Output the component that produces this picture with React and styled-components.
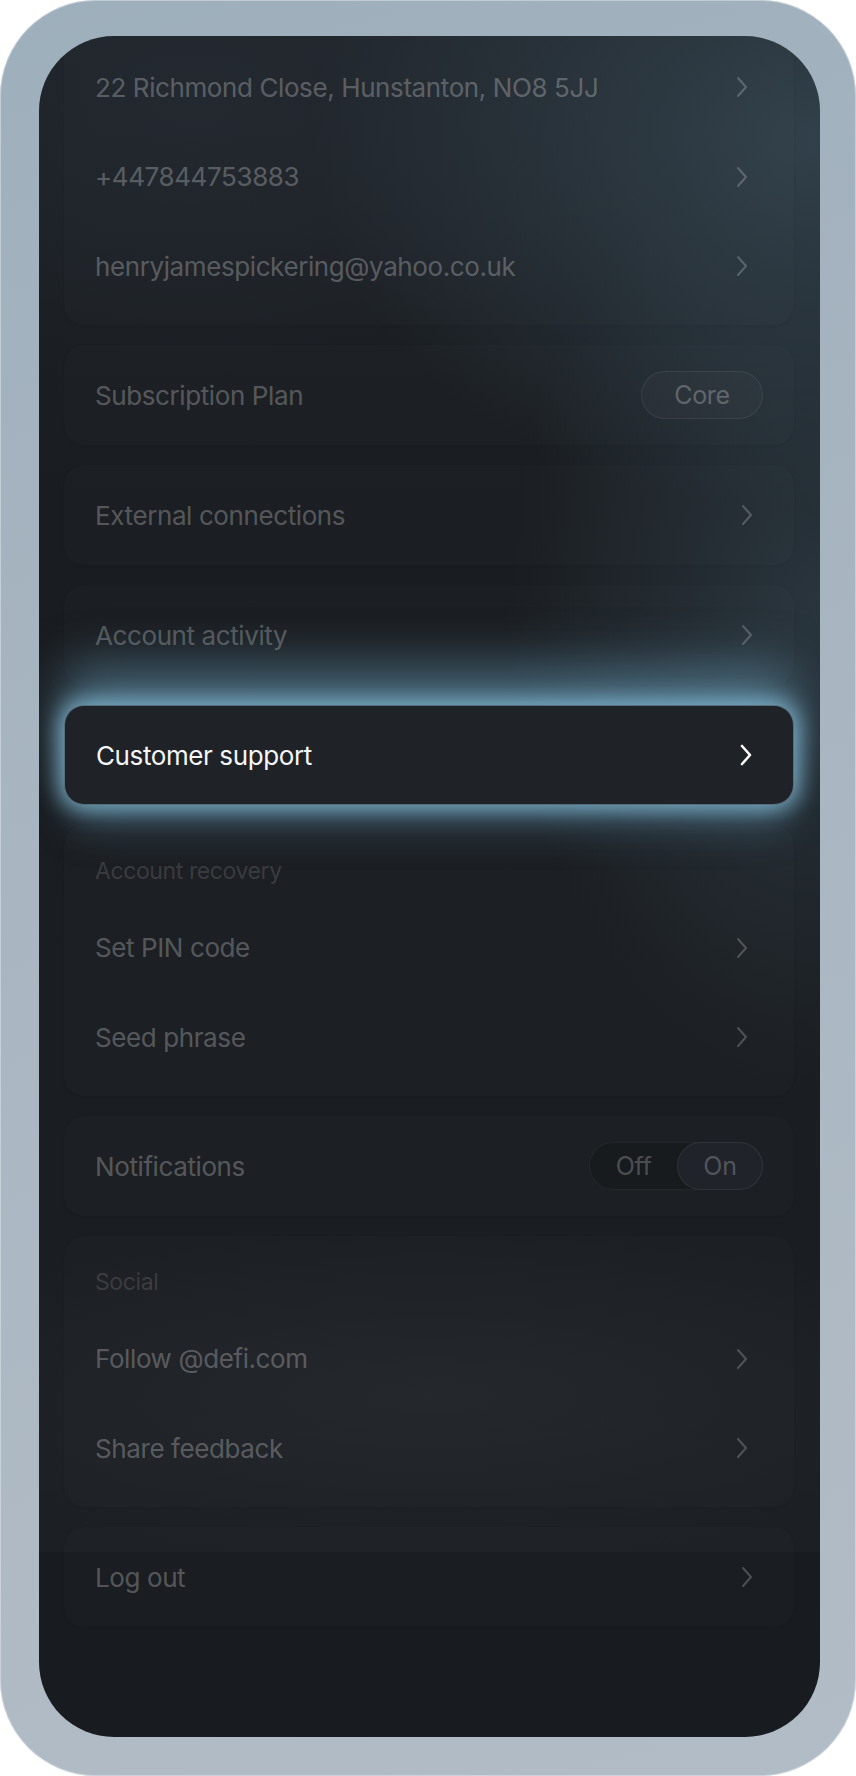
import React from "react";
import styled, { createGlobalStyle, css } from "styled-components";

const GlobalStyle = createGlobalStyle`
    html, body {
        margin: 0;
        padding: 0;
        background: #ffffff;
    }
    body {
        font-family: Inter, "Noto Sans", "Liberation Sans", sans-serif;
        -webkit-font-smoothing: antialiased;
    }
`;

const Frame = styled.div`
    width: 856px;
    height: 1776px;
    box-sizing: border-box;
    padding: 36px 36px 39px 39px;
    border-radius: 96px;
    background: linear-gradient(165deg, #9eafbc 0%, #a9b6c1 45%, #b2bcc6 100%);
    box-shadow: inset 0 0 0 1px rgba(255, 255, 255, 0.35);
`;

const Screen = styled.div`
    position: relative;
    height: 100%;
    border-radius: 75px;
    overflow: hidden;
    background:
        linear-gradient(to bottom, transparent 1516px, #181b1f 1516px),
        radial-gradient(ellipse 65% 22% at 100% 6%, rgba(50, 66, 76, 0.95), transparent),
        radial-gradient(ellipse 40% 28% at 100% 34%, rgba(44, 57, 66, 0.85), transparent),
        radial-gradient(ellipse 55% 16% at 20% 4%, rgba(36, 42, 50, 0.6), transparent),
        radial-gradient(ellipse 80% 10% at 50% 80%, rgba(38, 41, 46, 0.7), transparent),
        linear-gradient(180deg, #1e2329 0%, #191c20 28%, #1a1d21 55%, #1a1d21 80%, #1c1f23 89%);
`;

const List = styled.div`
    display: flex;
    flex-direction: column;
    gap: 20px;
    padding: 0 26px 0 25px;
    margin-top: -7.5px;
`;

const Card = styled.div`
    box-sizing: border-box;
    border-radius: 20px;
    background: rgba(255, 255, 255, 0.012);
    box-shadow: 0 1px 3px rgba(0, 0, 0, 0.06);
    ${(p) =>
        p.$single
            ? css`
                  height: 100px;
                  display: flex;
                  align-items: center;
                  justify-content: space-between;
                  padding: 0 31px;
              `
            : css`
                  padding: 14px 0;
              `}
    ${(p) =>
        p.$active &&
        css`
            position: relative;
            z-index: 1;
            background: #1f2227;
            border: 1px solid rgba(150, 205, 228, 0.45);
            box-shadow:
                0 0 22px 5px rgba(135, 192, 218, 0.85),
                0 -38px 50px 0 rgba(100, 150, 175, 0.6),
                0 28px 40px -8px rgba(92, 140, 166, 0.42);
        `}
`;

const Row = styled.div`
    height: 89.5px;
    display: flex;
    align-items: center;
    justify-content: space-between;
    padding: 0 31px;
`;

const GroupLabel = styled.div`
    height: 64px;
    display: flex;
    align-items: center;
    padding: 0 31px;
    font-size: 23px;
    letter-spacing: -0.4px;
    color: rgba(255, 255, 255, 0.15);
`;

const Text = styled.span`
    font-size: 26px;
    letter-spacing: -0.4px;
    color: ${(p) => (p.$active ? "#f4f6f8" : "rgba(255, 255, 255, 0.27)")};
`;

const ChevronIcon = styled.svg`
    flex: none;
    width: 12px;
    height: 22px;
    margin-right: ${(p) => (p.$group ? "15px" : "10px")};
    color: ${(p) => (p.$active ? "#ffffff" : "rgba(255, 255, 255, 0.22)")};
`;

const Pill = styled.div`
    width: 122px;
    height: 48px;
    box-sizing: border-box;
    border-radius: 24px;
    display: flex;
    align-items: center;
    justify-content: center;
    border: 1px solid rgba(255, 255, 255, 0.07);
    background: rgba(255, 255, 255, 0.025);
    font-size: 25px;
    letter-spacing: -0.3px;
    color: rgba(255, 255, 255, 0.25);
`;

const Toggle = styled.div`
    width: 174px;
    height: 48px;
    box-sizing: border-box;
    border-radius: 24px;
    display: flex;
    border: 1px solid rgba(255, 255, 255, 0.05);
    background: rgba(0, 0, 0, 0.12);
`;

const ToggleOption = styled.div`
    flex: ${(p) => (p.$on ? "0 0 86px" : "1")};
    box-sizing: border-box;
    border-radius: 24px;
    display: flex;
    align-items: center;
    justify-content: center;
    font-size: 25px;
    letter-spacing: -0.3px;
    color: rgba(255, 255, 255, 0.24);
    ${(p) =>
        p.$on &&
        css`
            margin: -1px -1px -1px 0;
            background: #20242a;
            border: 1px solid rgba(255, 255, 255, 0.07);
        `}
`;

const Chevron = ({ group, active }) => (
    <ChevronIcon $group={group} $active={active} viewBox="0 0 12 22" fill="none">
        <path
            d="M2 2 L10 11 L2 20"
            stroke="currentColor"
            strokeWidth={active ? 2.6 : 2}
            strokeLinecap="round"
            strokeLinejoin="round"
        />
    </ChevronIcon>
);

const contact = [
    "22 Richmond Close, Hunstanton, NO8 5JJ",
    "+447844753883",
    "henryjamespickering@yahoo.co.uk",
];

const LinkCard = ({ label, active }) => (
    <Card $single $active={active}>
        <Text $active={active}>{label}</Text>
        <Chevron active={active} />
    </Card>
);

const Group = ({ title, items }) => (
    <Card>
        {title && <GroupLabel>{title}</GroupLabel>}
        {items.map((item) => (
            <Row key={item}>
                <Text>{item}</Text>
                <Chevron group />
            </Row>
        ))}
    </Card>
);

const App = () => {
    return (
        <>
            <GlobalStyle />
            <Frame>
                <Screen>
                    <List>
                        <Group items={contact} />

                        <Card $single>
                            <Text>Subscription Plan</Text>
                            <Pill>Core</Pill>
                        </Card>

                        <LinkCard label="External connections" />
                        <LinkCard label="Account activity" />
                        <LinkCard label="Customer support" active />

                        <Group title="Account recovery" items={["Set PIN code", "Seed phrase"]} />

                        <Card $single>
                            <Text>Notifications</Text>
                            <Toggle>
                                <ToggleOption>Off</ToggleOption>
                                <ToggleOption $on>On</ToggleOption>
                            </Toggle>
                        </Card>

                        <Group title="Social" items={["Follow @defi.com", "Share feedback"]} />

                        <LinkCard label="Log out" />
                    </List>
                </Screen>
            </Frame>
        </>
    );
};

export default App;
